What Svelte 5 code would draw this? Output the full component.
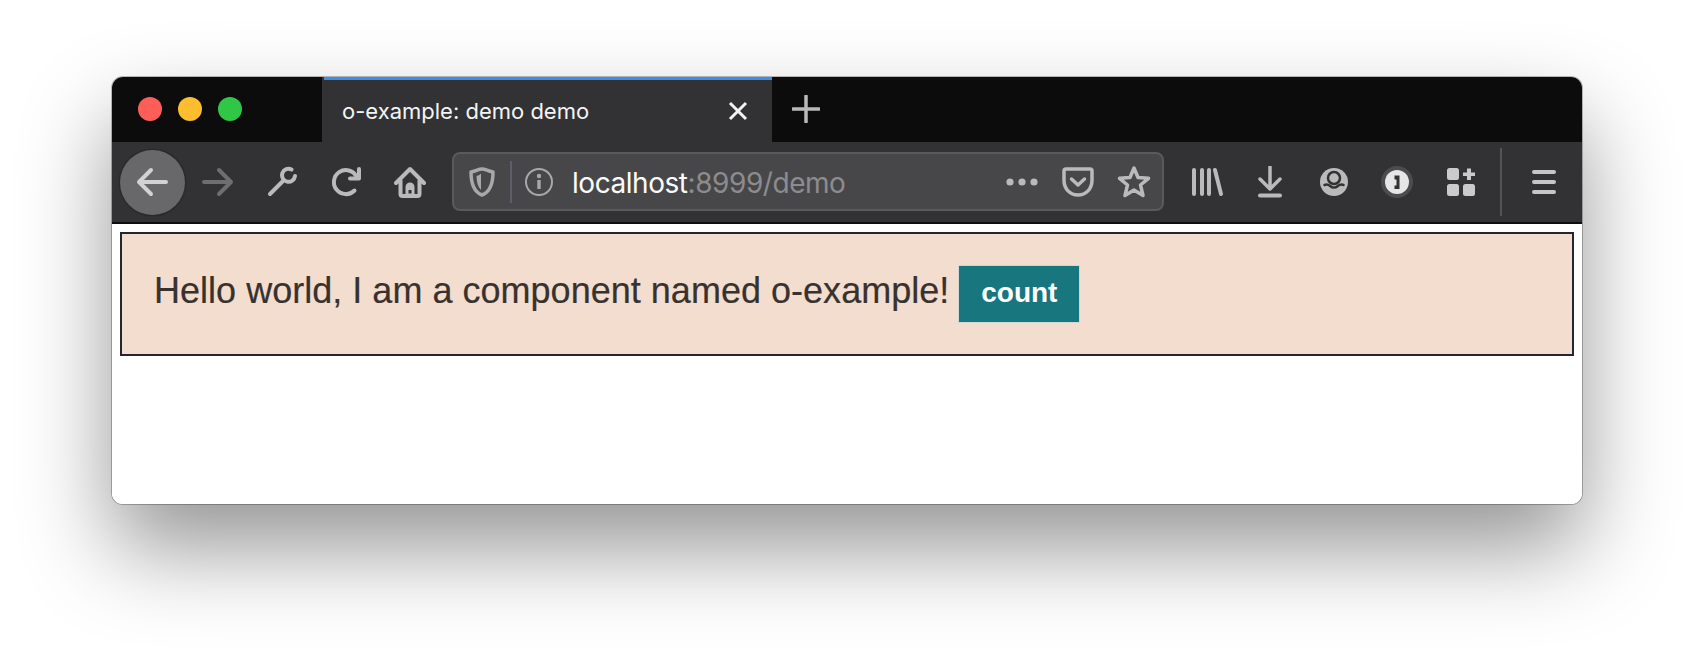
<script>
  let count = $state(0);
</script>

<div class="stage">
  <div class="window">
    <div class="tabbar">
      <div class="lights">
        <span class="light red"></span>
        <span class="light yellow"></span>
        <span class="light green"></span>
      </div>
      <div class="tab">
        <span class="tab-title">o-example: demo demo</span>
        <svg class="close" width="22" height="22" viewBox="0 0 22 22"><path d="M3 3 19 19M19 3 3 19" /></svg>
      </div>
      <svg class="plus" width="28" height="28" viewBox="0 0 28 28"><path d="M14 1V27M1 14H27" /></svg>
    </div>

    <div class="toolbar">
      <div class="tb back">
        <span class="back-circle">
          <svg width="32" height="32" viewBox="0 0 32 32"><path class="s4" d="M30 16H3M15 4 3 16 15 28" /></svg>
        </span>
      </div>
      <div class="tb forward">
        <svg width="32" height="32" viewBox="0 0 32 32"><path class="s4" d="M2 16H29M17 4 29 16 17 28" /></svg>
      </div>
      <div class="tb">
        <svg width="32" height="32" viewBox="0 0 32 32"><path class="s4" d="M4 28 17 15" /><path class="s4" d="M25.500 3.500A6.500 6.500 0 1 0 29 10" /></svg>
      </div>
      <div class="tb">
        <svg width="32" height="32" viewBox="0 0 32 32"><path class="s4" d="M24.500 24.500A12 12 0 1 1 26.500 10.500" /><path class="s4" d="M29 3V12.500H20" /></svg>
      </div>
      <div class="tb">
        <svg width="32" height="32" viewBox="0 0 32 32"><path class="s4" d="M2 17 16 3 30 17M6.500 14V28A2 2 0 0 0 8.500 30H23.500A2 2 0 0 0 25.500 28V14" /><path class="f" fill-rule="evenodd" d="M11.500 30V21A4.500 4.500 0 0 1 20.500 21V30ZM14.500 24V27.500H17.500V24Z" /></svg>
      </div>

      <div class="urlbar">
        <div class="shield">
          <svg width="26" height="30" viewBox="0 0 26 30"><path class="s3 dim" d="M2 5C8 4 9 2 13 2S18 4 24 5C24 17 21 25 13 28 5 25 2 17 2 5Z" /><path class="f dimf" d="M12 6.500V23C9 20 7.500 15 7.500 9 10 8.500 11 7.500 12 6.500Z" /></svg>
        </div>
        <span class="url-sep"></span>
        <svg class="info" width="30" height="30" viewBox="0 0 30 30"><circle class="s2" cx="15" cy="15" r="13" /><circle class="f dimf" cx="15" cy="9" r="2.200" /><path class="f dimf" d="M13.300 13H16.700V22H13.300Z" /></svg>
        <span class="url"><span class="host">localhost</span>:8999/demo</span>
        <div class="url-actions">
          <svg class="ua dots" width="32" height="10" viewBox="0 0 32 10"><circle class="f" cx="4" cy="5" r="3.600" /><circle class="f" cx="16" cy="5" r="3.600" /><circle class="f" cx="28" cy="5" r="3.600" /></svg>
          <svg class="ua pocket" width="32" height="30" viewBox="0 0 32 30"><path class="s3" d="M4 2H28A2 2 0 0 1 30 4V13C30 22 24 28 16 28S2 22 2 13V4A2 2 0 0 1 4 2Z" /><path class="s3" d="M9.500 12 16 18 22.500 12" /></svg>
          <svg class="ua star" width="34" height="34" viewBox="0 0 34 34"><path class="s3" d="M17 3 21 12.500 31.500 13.300 23.500 20 26 30.500 17 25 8 30.500 10.500 20 2.500 13.300 13 12.500Z" /></svg>
        </div>
      </div>

      <div class="right-tools">
        <div class="rt">
          <svg width="32" height="30" viewBox="0 0 32 30"><path class="s4" d="M3 3V27M11 3V27M18 3V27M24 3 30 27" /></svg>
        </div>
        <div class="rt">
          <svg width="26" height="32" viewBox="0 0 26 32"><path class="s3" d="M13 1V22M3 13 13 23 23 13" /><path class="s4" d="M3 29.500H23" /></svg>
        </div>
        <div class="rt">
          <svg width="30" height="30" viewBox="0 0 30 30"><circle class="f" cx="15" cy="15" r="14" /><circle class="hole-line" cx="15" cy="11" r="6" /><path class="hole-line" d="M5.500 18C8 17 10 18 11.500 19.300 13.500 21 16.500 21 18.500 19.300 20 18 22 17 24.500 18" /></svg>
        </div>
        <div class="rt">
          <svg width="34" height="34" viewBox="0 0 34 34"><circle class="opw-ring" cx="17" cy="17" r="16" /><circle class="opw-face" cx="17" cy="17" r="12" /><path class="hole" d="M14.500 10.500H19.500V24H14.500V20.500H16.500V14.500H14.500Z" /></svg>
        </div>
        <div class="rt">
          <svg width="30" height="30" viewBox="0 0 30 30"><rect class="light-f" x="1" y="1" width="12" height="12" rx="2.500" /><rect class="light-f" x="1" y="17" width="12" height="12" rx="2.500" /><rect class="light-f" x="17" y="17" width="12" height="12" rx="2.500" /><path class="light-f" d="M21 1.500H25V5.500H29V9H25V13H21V9H17V5.500H21Z" /></svg>
        </div>
        <span class="tool-sep"></span>
        <div class="rt menu">
          <svg width="24" height="24" viewBox="0 0 24 24"><path class="s4 menu-bars" d="M2 2H22M2 12H22M2 22H22" /></svg>
        </div>
      </div>
    </div>

    <div class="content">
      <div class="component">
        <span class="hello">Hello world, I am a component named o-example!</span>
        <button class="count" onclick={() => count++}>count</button>
      </div>
    </div>
  </div>
</div>

<style>
  :global(body) {
    margin: 0;
    background: #fff;
    overflow: hidden;
  }
  .stage {
    width: 1694px;
    height: 652px;
    box-sizing: border-box;
    padding: 77px 112px 148px;
    overflow: hidden;
  }
  .window {
    width: 1470px;
    height: 427px;
    border-radius: 11px;
    overflow: hidden;
    background: #fff;
    display: flex;
    flex-direction: column;
    box-shadow: 0 0 0 1px rgba(0, 0, 0, 0.25), 0 44px 90px rgba(0, 0, 0, 0.42);
  }
  svg { display: block; }
  .tabbar {
    height: 65px;
    background: #0c0c0c;
    display: flex;
    align-items: stretch;
    flex: none;
  }
  .lights {
    width: 210px;
    box-sizing: border-box;
    padding: 20px 0 0 26px;
    display: flex;
    gap: 16px;
  }
  .light {
    width: 24px;
    height: 24px;
    border-radius: 50%;
  }
  .red { background: #fd5f58; }
  .yellow { background: #febc2f; }
  .green { background: #31c746; }
  .tab {
    width: 450px;
    box-sizing: border-box;
    background: linear-gradient(#3a8ee8, #3a8ee8) 2px 0 / calc(100% - 2px) 3px no-repeat, #323234;
    padding: 4px 23px 2px 20px;
    display: flex;
    align-items: center;
    justify-content: space-between;
  }
  .tab-title {
    color: #f4f4f4;
    font: 22px/1 Inter, "Open Sans", sans-serif;
  }
  .close path { stroke: #f2f2f2; stroke-width: 3; fill: none; }
  .plus {
    margin: 18px 0 0 20px;
  }
  .plus path { stroke: #b9b9b9; stroke-width: 3.5; stroke-linecap: round; fill: none; }
  .toolbar {
    height: 80px;
    background: #323234;
    border-bottom: 2px solid #0d0d0d;
    display: flex;
    align-items: center;
    flex: none;
    padding-left: 8px;
  }
  .tb {
    width: 64px;
    height: 66px;
    display: flex;
    align-items: center;
    justify-content: center;
    flex: none;
  }
  .back {
    margin-right: 2px;
  }
  .back-circle {
    width: 65px;
    height: 65px;
    flex: none;
    border-radius: 50%;
    background: #68686a;
    box-shadow: 0 0 0 1.500px #2a2a2c;
    display: flex;
    align-items: center;
    justify-content: center;
  }
  .s2, .s3, .s4 {
    fill: none;
    stroke: #bababa;
    stroke-linecap: round;
    stroke-linejoin: round;
  }
  .s2 { stroke-width: 2; }
  .s3 { stroke-width: 3.500; }
  .s4 { stroke-width: 4; }
  .f { fill: #bababa; }
  .dim { stroke: #a8a8a8; }
  .dimf { fill: #a8a8a8; }
  .light-f { fill: #cacaca; }
  .back .s4 { stroke: #d2d2d2; }
  .forward .s4 { stroke: #6e6e70; }
  .hole { fill: #323234; }
  .hole-line { fill: none; stroke: #323234; stroke-width: 2.500; stroke-linecap: round; }
  .urlbar {
    margin: 0 0 1px 10px;
    width: 712px;
    height: 59px;
    box-sizing: border-box;
    background: #474749;
    border: 2px solid #5a5a5c;
    border-radius: 8px;
    display: flex;
    align-items: center;
    flex: none;
  }
  .shield {
    width: 56px;
    display: flex;
    justify-content: center;
    flex: none;
  }
  .url-sep {
    width: 2px;
    height: 42px;
    background: #5d5f68;
    flex: none;
  }
  .info {
    margin-left: 12px;
    flex: none;
  }
  .info .s2 { stroke: #a8a8a8; }
  .url {
    margin: 3px 0 0 18px;
    color: #8c8c8e;
    font: 28px/1 Inter, "Open Sans", sans-serif;
    letter-spacing: -0.45px;
    white-space: nowrap;
  }
  .host { color: #fbfbfb; }
  .url-actions {
    margin-left: auto;
    display: flex;
    align-items: center;
    padding-right: 11px;
  }
  .ua { flex: none; }
  .pocket { margin-left: 24px; }
  .star { margin-left: 23px; }
  .right-tools {
    margin-left: 11px;
    display: flex;
    align-items: center;
    flex: none;
  }
  .rt {
    width: 63.500px;
    display: flex;
    justify-content: center;
    flex: none;
  }
  .tool-sep {
    width: 2px;
    height: 68px;
    background: #545456;
    margin: 0 0 0 7px;
    flex: none;
  }
  .menu { margin-left: 10px; width: 64px; }
  .menu-bars { stroke: #c6c6c6; }
  .opw-ring { fill: #4c4c4e; }
  .opw-face { fill: #e6e6e6; }
  .content {
    flex: 1;
    padding: 8px;
    background: #fff;
  }
  .component {
    height: 124px;
    box-sizing: border-box;
    border: 2px solid #25252f;
    background: #f2ddcf;
    padding: 32px 0 0 32px;
    display: flex;
    align-items: flex-start;
  }
  .hello {
    color: #38312e;
    font: 36px/50px "Liberation Sans", Arial, sans-serif;
    letter-spacing: 0.02px;
    -webkit-text-stroke: 0.2px #38312e;
  }
  .count {
    margin: -1px 0 0 9px;
    width: 122px;
    height: 58px;
    border: 1px solid #cfd8d5;
    background: #17767e;
    color: #fff;
    font: bold 28px/1 "Liberation Sans", Arial, sans-serif;
    padding: 0 0 2px;
  }
</style>
